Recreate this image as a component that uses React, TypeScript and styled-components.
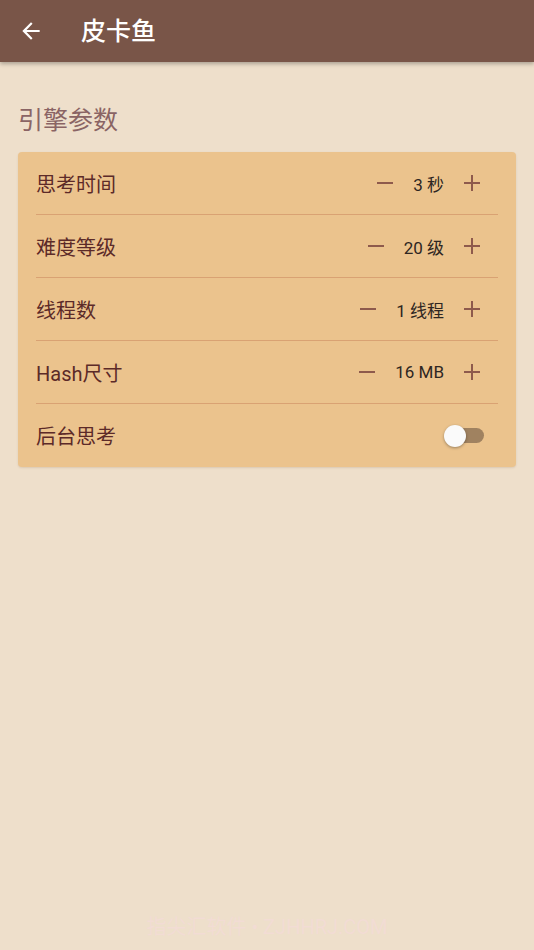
import React, { useState } from 'react'
import styled, { createGlobalStyle } from 'styled-components'

const GlobalStyle = createGlobalStyle`
  html, body {
    margin: 0;
    padding: 0;
    background: #eedfcb;
  }
  body {
    font-family: Roboto, "Noto Sans CJK SC", sans-serif;
  }
`

const Page = styled.div`
  min-height: 100vh;
  display: flex;
  flex-direction: column;
  background: #eedfcb;
`

const AppBar = styled.header`
  height: 62px;
  background: #795548;
  display: flex;
  align-items: center;
  padding-left: 18px;
  box-shadow: 0 2px 4px rgba(0, 0, 0, 0.28);
  position: relative;
  z-index: 1;
`

const BackButton = styled.div`
  width: 26px;
  height: 26px;
  display: flex;
  align-items: center;
  justify-content: center;
  color: #fff;
`

const Title = styled.h1`
  margin: 0 0 0 37px;
  font-size: 25px;
  font-weight: 500;
  color: #fff;
  line-height: 1;
`

const Content = styled.main`
  padding: 0 18px;
`

const SectionTitle = styled.h2`
  margin: 0;
  padding: 46px 0 18px;
  font-size: 25px;
  font-weight: 400;
  line-height: 26px;
  color: #8a6464;
`

const Card = styled.section`
  background: #ebc38d;
  border-radius: 4px;
  padding: 0 18px;
  box-shadow: 0 1px 2px rgba(120, 80, 40, 0.15);
`

const Row = styled.div<{ $last?: boolean }>`
  height: ${(p) => (p.$last ? 63 : 62)}px;
  display: flex;
  align-items: center;
  justify-content: space-between;
  border-bottom: ${(p) => (p.$last ? 'none' : '1px solid #d9a273')};
`

const Label = styled.span`
  font-size: 20px;
  color: #5c2a28;
`

const Stepper = styled.div`
  display: flex;
  align-items: center;
  gap: 20px;
  margin-right: 18px;
`

const StepIcon = styled.svg`
  width: 16px;
  height: 16px;
  display: block;
`

const Value = styled.span`
  font-size: 17px;
  color: #2e2622;
  white-space: nowrap;
`

const Toggle = styled.div`
  position: relative;
  width: 40px;
  height: 22px;
  margin-right: 14px;
  display: flex;
  align-items: center;
  justify-content: flex-end;
`

const Track = styled.div`
  width: 34px;
  height: 15px;
  border-radius: 8px;
  background: #a08260;
`

const Thumb = styled.div`
  position: absolute;
  left: 0;
  top: 0;
  width: 22px;
  height: 22px;
  border-radius: 50%;
  background: #fafafa;
  box-shadow: 0 1px 3px rgba(0, 0, 0, 0.35);
`

const Watermark = styled.div`
  margin-top: auto;
  padding-bottom: 10px;
  text-align: center;
  font-size: 20px;
  color: #f3dcd6;
  opacity: 0.85;
`

const Minus = () => (
  <StepIcon viewBox="0 0 16 16">
    <path d="M0 8h16" stroke="#8e5a4c" strokeWidth="2" />
  </StepIcon>
)

const Plus = () => (
  <StepIcon viewBox="0 0 16 16">
    <path d="M0 8h16M8 0v16" stroke="#8e5a4c" strokeWidth="2" />
  </StepIcon>
)

const settings = [
  { label: '思考时间', value: '3 秒' },
  { label: '难度等级', value: '20 级' },
  { label: '线程数', value: '1 线程' },
  { label: 'Hash尺寸', value: '16 MB' },
]

const App = () => {
  const [bg] = useState(false)
  return (
    <Page>
      <GlobalStyle />
      <AppBar>
        <BackButton>
          <svg width="26" height="26" viewBox="0 0 24 24" fill="currentColor">
            <path d="M20 11H7.83l5.59-5.59L12 4l-8 8 8 8 1.41-1.41L7.83 13H20v-2z" />
          </svg>
        </BackButton>
        <Title>皮卡鱼</Title>
      </AppBar>
      <Content>
        <SectionTitle>引擎参数</SectionTitle>
        <Card>
          {settings.map((s) => (
            <Row key={s.label}>
              <Label>{s.label}</Label>
              <Stepper>
                <Minus />
                <Value>{s.value}</Value>
                <Plus />
              </Stepper>
            </Row>
          ))}
          <Row $last>
            <Label>后台思考</Label>
            <Toggle>
              <Track />
              <Thumb style={{ left: bg ? 18 : 0 }} />
            </Toggle>
          </Row>
        </Card>
      </Content>
      <Watermark>指尖汇软件 • ZJHHRJ.COM</Watermark>
    </Page>
  )
}

export default App
